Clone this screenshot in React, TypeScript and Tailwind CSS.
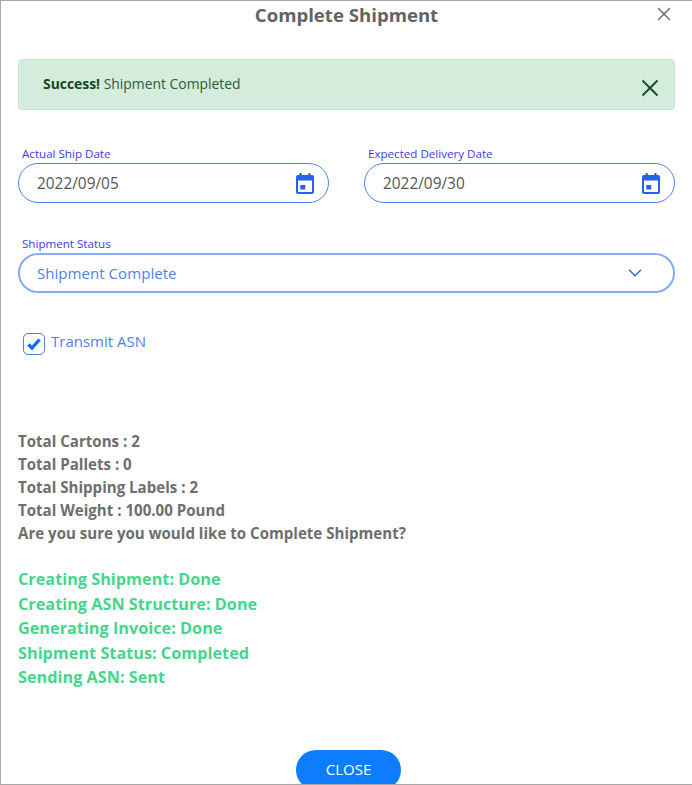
import React from 'react';
import { X, ChevronDown } from 'lucide-react';

const CalendarIcon = () => (
  <svg width="18" height="21" viewBox="0 0 18 21" className="shrink-0">
    <rect x="3.5" y="0" width="2.2" height="4" fill="#2563eb" />
    <rect x="12.3" y="0" width="2.2" height="4" fill="#2563eb" />
    <rect x="0" y="2" width="18" height="19" rx="2" fill="#2563eb" />
    <rect x="2" y="7.5" width="14" height="11.5" fill="#fff" />
    <rect x="4.3" y="12" width="5" height="4.5" fill="#2563eb" />
  </svg>
);

const DateField = ({ label, value }: { label: string; value: string }) => (
  <div className="flex-1">
    <label className="block h-[20px] pl-[4px] text-[11.6px] leading-[21px] text-[#3b3bf0]">{label}</label>
    <div className="flex h-[40px] items-center justify-between rounded-[20px] border border-[#4c83ee] pl-[18px] pr-[14px]">
      <span className="mt-[1px] text-[15.4px] text-[#555555]">{value}</span>
      <CalendarIcon />
    </div>
  </div>
);

const totals = ['Total Cartons : 2', 'Total Pallets : 0', 'Total Shipping Labels : 2', 'Total Weight : 100.00 Pound', 'Are you sure you would like to Complete Shipment?'];
const steps = ['Creating Shipment: Done', 'Creating ASN Structure: Done', 'Generating Invoice: Done', 'Shipment Status: Completed', 'Sending ASN: Sent'];

export default function App() {
  return (
    <div className="relative h-[785px] w-[692px] overflow-hidden border-t border-l border-b border-[#a8a8a8] bg-white pl-[17px] pr-[17px] font-['Open_Sans',sans-serif]">
      <h1 className="h-[58px] text-center text-[18.6px] leading-[27px] font-bold text-[#636363]">Complete Shipment</h1>
      <button className="absolute top-[2px] right-[17px] text-[#6e6e6e]">
        <X size={22} strokeWidth={1.6} />
      </button>

      <div className="flex h-[51px] items-center justify-between rounded-[4px] border border-[#c9e4d3] bg-[#d4ecdc] pl-[24px] pr-[15px] text-[13.9px] text-[#2b5c3a]">
        <p><strong className="font-bold text-[#14491f]">Success!</strong> Shipment Completed</p>
        <svg width="18" height="18" viewBox="0 0 18 18" className="mt-[6px]">
          <path d="M1.5 1.5 L16.5 16.5 M16.5 1.5 L1.5 16.5" fill="none" stroke="#14532d" strokeWidth="2" />
        </svg>
      </div>

      <div className="mt-[33px] flex gap-[35px]">
        <DateField label="Actual Ship Date" value="2022/09/05" />
        <DateField label="Expected Delivery Date" value="2022/09/30" />
      </div>

      <div className="mt-[30px]">
        <label className="block h-[20px] pl-[4px] text-[11.6px] leading-[21px] text-[#3b3bf0]">Shipment Status</label>
        <div className="flex h-[40px] items-center justify-between rounded-[20px] border-2 border-[#86aaf6] pl-[17px] pr-[27px] text-[15.1px] text-[#4f7ff0]">
          <span>Shipment Complete</span>
          <ChevronDown size={22} strokeWidth={1.9} className="text-[#3f74e8]" />
        </div>
      </div>

      <div className="mt-[37px] ml-[5px] flex items-start gap-[6px]">
        <span className="mt-[3px] flex h-[22px] w-[22px] items-center justify-center rounded-[5px] border border-[#4c7fe0] bg-white">
          <svg width="14" height="12" viewBox="0 0 14 12">
            <path d="M1.5 6.5 L5 10 L12.5 1.5" fill="none" stroke="#0d6efd" strokeWidth="3.4" />
          </svg>
        </span>
        <span className="text-[15px] leading-[22px] text-[#4f7ff0]">Transmit ASN</span>
      </div>

      <div className="mt-[75px] text-[15.08px] leading-[23px] font-bold text-[#6e6e6e]">
        {totals.map((t) => <p key={t}>{t}</p>)}
      </div>

      <div className="mt-[22px] text-[16.25px] leading-[24.6px] font-bold text-[#45d68e]">
        {steps.map((s) => <p key={s}>{s}</p>)}
      </div>

      <div className="mt-[60px] flex justify-center">
        <button className="ml-[4px] h-[40px] w-[105px] shrink-0 rounded-[20px] bg-[#0d7dfd] pb-[2px] text-[15px] text-white">CLOSE</button>
      </div>
    </div>
  );
}
